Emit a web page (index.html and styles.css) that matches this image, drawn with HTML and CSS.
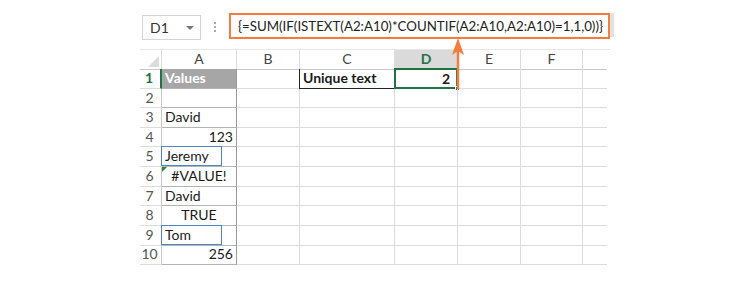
FILE: index.html
```html
<!DOCTYPE html>
<html lang="en">
<head>
  <meta charset="UTF-8" />
  <title>Unique text count</title>
  <link rel="stylesheet" href="styles.css">
</head>
<body>
  <div class="excel">
    <!-- Formula bar -->
    <div class="formula-bar">
      <div class="name-box"><span>D1</span><span class="caret"></span></div>
      <div class="dots"><i></i><i></i><i></i></div>
      <div class="formula">{=SUM(IF(ISTEXT(A2:A10)*COUNTIF(A2:A10,A2:A10)=1,1,0))}</div>
    </div>

    <!-- Sheet -->
    <div class="sheet">
      <div class="row head">
        <div class="corner"><span class="tri"></span></div>
        <div>A</div><div>B</div><div>C</div><div class="sel">D</div><div>E</div><div>F</div><div class="last"></div>
      </div>
      <div class="row">
        <div class="num sel">1</div>
        <div class="a title">Values</div><div></div><div class="label">Unique text</div>
        <div class="active">2<span class="handle"></span></div><div></div><div></div><div class="last"></div>
      </div>
      <div class="row">
        <div class="num">2</div>
        <div class="a"></div><div></div><div></div><div></div><div></div><div></div><div class="last"></div>
      </div>
      <div class="row">
        <div class="num">3</div>
        <div class="a">David</div><div></div><div></div><div></div><div></div><div></div><div class="last"></div>
      </div>
      <div class="row">
        <div class="num">4</div>
        <div class="a r">123</div><div></div><div></div><div></div><div></div><div></div><div class="last"></div>
      </div>
      <div class="row">
        <div class="num">5</div>
        <div class="a"><span class="box">Jeremy</span></div><div></div><div></div><div></div><div></div><div></div><div class="last"></div>
      </div>
      <div class="row">
        <div class="num">6</div>
        <div class="a c"><span class="err"></span>#VALUE!</div><div></div><div></div><div></div><div></div><div></div><div class="last"></div>
      </div>
      <div class="row">
        <div class="num">7</div>
        <div class="a">David</div><div></div><div></div><div></div><div></div><div></div><div class="last"></div>
      </div>
      <div class="row">
        <div class="num">8</div>
        <div class="a c">TRUE</div><div></div><div></div><div></div><div></div><div></div><div class="last"></div>
      </div>
      <div class="row">
        <div class="num">9</div>
        <div class="a"><span class="box">Tom</span></div><div></div><div></div><div></div><div></div><div></div><div class="last"></div>
      </div>
      <div class="row">
        <div class="num">10</div>
        <div class="a r">256</div><div></div><div></div><div></div><div></div><div></div><div class="last"></div>
      </div>
    </div>

    <!-- Arrow from D1 to the formula -->
    <svg class="arrow" width="14" height="52" viewBox="0 0 14 52">
      <line x1="7" y1="12" x2="7" y2="51" stroke="#f47c3c" stroke-width="2.5" />
      <polygon points="7,0 13,17 7,13 1,17" fill="#f47c3c" />
    </svg>
  </div>
</body>
</html>
```

FILE: styles.css
```css
* {
  box-sizing: border-box;
}

body {
  margin: 0;
  background: #fff;
  font-family: Lato, 'Open Sans', sans-serif;
  font-size: 14px;
  color: #1a1a1a;
}

.excel {
  position: relative;
  width: 470px;
  margin-left: 140px;
  padding-top: 13px;
}

/* formula bar */
.formula-bar {
  display: flex;
  align-items: flex-start;
  height: 27px;
}

.name-box {
  display: flex;
  align-items: center;
  justify-content: space-between;
  width: 59px;
  height: 25px;
  margin: 2px 0 0 2px;
  padding: 0 6px 0 7px;
  border: 1px solid #d4d4d4;
  color: #333;
}

.caret {
  width: 0;
  height: 0;
  border-left: 4px solid transparent;
  border-right: 4px solid transparent;
  border-top: 4px solid #777;
}

.dots {
  display: flex;
  flex-direction: column;
  gap: 2px;
  width: 28px;
  align-items: center;
  padding-top: 9px;
}

.dots i {
  width: 2px;
  height: 2px;
  background: #aaa;
}

.formula {
  flex: 1;
  height: 26px;
  padding: 2px 0 0 7px;
  border: 2px solid #f47c3c;
  color: #222;
  font-size: 13.3px;
  line-height: 19px;
  white-space: nowrap;
  box-shadow: 5px -1px 0 -1px #e2e2e2;
}

/* sheet grid */
.sheet {
  margin-top: 9px;
}

.row {
  display: grid;
  grid-template-columns: 22px 75px 63px 95px 63px 63px 62px 24px;
  height: 19.6px;
}

.row > div {
  position: relative;
  border-right: 1px solid #dcdcdc;
  border-bottom: 1px solid #dcdcdc;
  padding: 0 3px;
  line-height: 18px;
  white-space: nowrap;
}

.row > .last {
  border-right: none;
}

.head {
  height: 20px;
  border-top: 1px solid #e6e6e6;
}

.head > div {
  text-align: center;
  color: #444;
  border-bottom-color: #c8c8c8;
}

.head > .sel {
  background: #dadada;
  color: #217346;
  font-weight: bold;
  border-bottom: 2px solid #217346;
}

.corner .tri {
  position: absolute;
  right: 2px;
  bottom: 2px;
  width: 0;
  height: 0;
  border-left: 11px solid transparent;
  border-bottom: 11px solid #dcdcdc;
}

.row > .num {
  padding: 0 2px 0 0;
  text-align: center;
  color: #555;
  border-right-color: #c8c8c8;
}

.row > .num.sel {
  color: #217346;
  font-weight: bold;
  border-right: 2px solid #217346;
}

.row > .a {
  border-right-color: #9a9a9a;
  border-bottom-color: #b4b4b4;
}

.row > .r {
  text-align: right;
}

.row > .c {
  text-align: center;
}

.row > .title {
  background: #a6a6a6;
  color: #fff;
  font-weight: bold;
}

.row > .label {
  font-weight: bold;
  border-left: 1px solid #222;
  border-bottom-color: #222;
  margin-left: -1px;
}

.row > .active {
  text-align: right;
  font-weight: bold;
  border: 2px solid #217346;
  margin: -1px 0 0 -1px;
  padding-right: 6px;
  line-height: 17px;
}

.handle {
  position: absolute;
  right: -4px;
  bottom: -4px;
  width: 5px;
  height: 5px;
  background: #217346;
  border: 1px solid #fff;
}

.box {
  display: block;
  width: 61px;
  height: 20px;
  margin: -1px 0 0 -4px;
  padding-left: 3px;
  border: 1px solid #4a86c8;
  line-height: 17px;
}

.err {
  position: absolute;
  left: 0;
  top: 0;
  width: 0;
  height: 0;
  border-top: 5px solid #1e8a3a;
  border-right: 5px solid transparent;
}

.arrow {
  position: absolute;
  left: 311px;
  top: 38px;
}
```
